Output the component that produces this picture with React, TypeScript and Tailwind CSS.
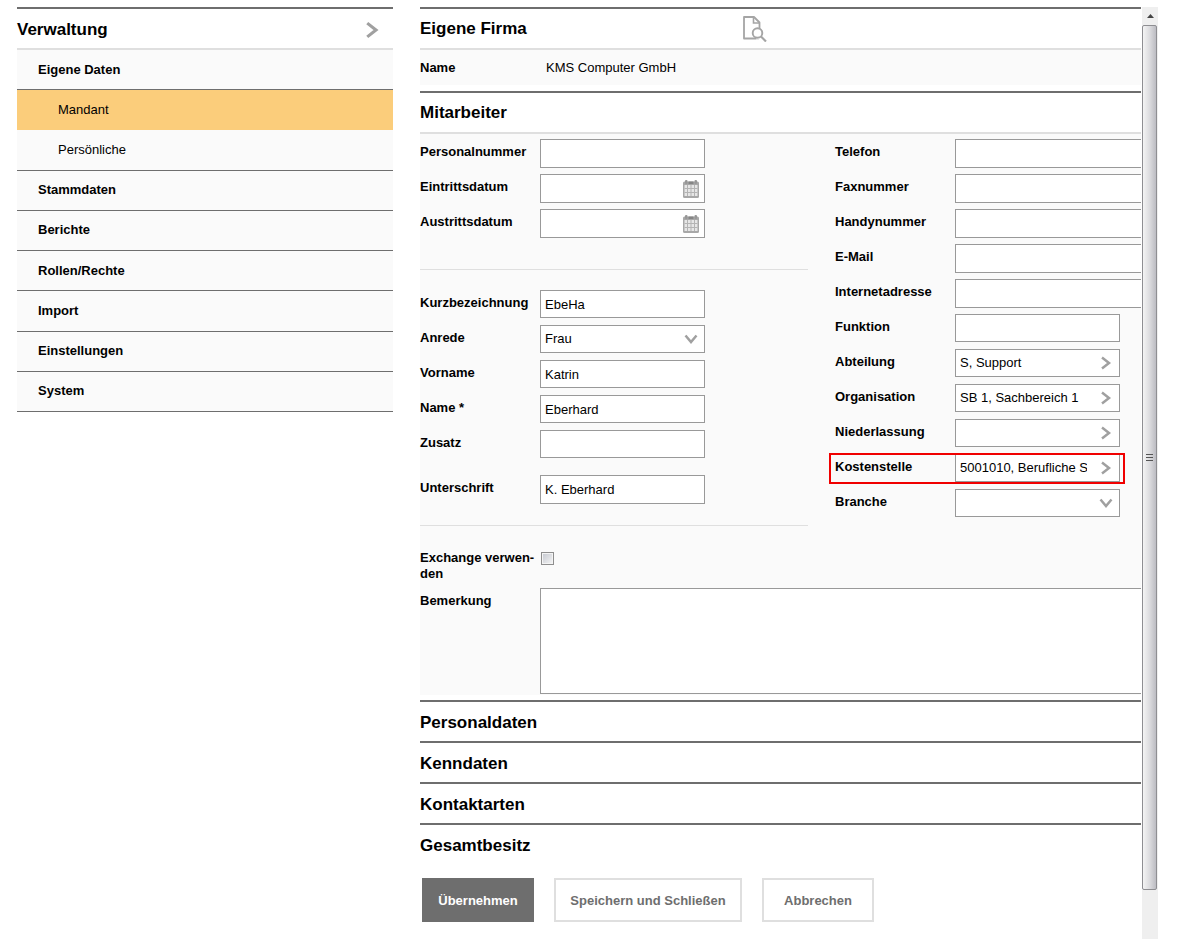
import { useState } from 'react';
import type { ReactNode } from 'react';

interface NavItem {
  label: string;
  sub?: boolean;
}

const navItems: NavItem[] = [
  { label: 'Eigene Daten' },
  { label: 'Mandant', sub: true },
  { label: 'Persönliche', sub: true },
  { label: 'Stammdaten' },
  { label: 'Berichte' },
  { label: 'Rollen/Rechte' },
  { label: 'Import' },
  { label: 'Einstellungen' },
  { label: 'System' },
];

const closedSections = ['Personaldaten', 'Kenndaten', 'Kontaktarten', 'Gesamtbesitz'];

const boxClass = 'border border-[#999] bg-white';

function Chevron({ down = false, size = 16 }: { down?: boolean; size?: number }) {
  return (
    <svg width={size} height={size} viewBox="0 0 16 16" fill="none" stroke="#a0a0a0" strokeWidth="2.5" aria-hidden="true">
      <path d={down ? 'M2.5 4.5L8 11l5.500-6.500' : 'M5 2.500L12 8l-7 5.500'} />
    </svg>
  );
}

function CalendarIcon() {
  return (
    <svg width="16" height="18" viewBox="0 0 16 18" aria-hidden="true">
      <rect x="0" y="1.500" width="16" height="16.500" rx="1.500" fill="#a8a8a8" />
      <rect x="2" y="0" width="2.500" height="4" rx="1" fill="#979797" />
      <rect x="11.500" y="0" width="2.500" height="4" rx="1" fill="#979797" />
      <rect x="5.500" y="1.500" width="5" height="2.500" fill="#858585" />
      <rect x="1.500" y="5" width="13" height="11" fill="#e6e6e6" />
      <path d="M4.500 5v11M8 5v11M11.500 5v11M1.500 8.500h13M1.500 12.500h13" stroke="#b4b4b4" strokeWidth="1" />
    </svg>
  );
}

function DocumentSearchIcon() {
  return (
    <svg width="24" height="26" viewBox="0 0 24 26" fill="none" stroke="#a5a5a5" aria-hidden="true">
      <path d="M16 22.500H1V1h10l5.500 5.500v16" strokeWidth="1.800" strokeLinejoin="round" />
      <path d="M10.500 1v6H16.500" strokeWidth="1.600" />
      <path d="M13 23.500h6v-9h-2z" fill="#fff" stroke="none" />
      <circle cx="14.500" cy="17" r="4.800" strokeWidth="1.900" fill="#fff" />
      <path d="M18 20.500l5 5" strokeWidth="2.200" />
    </svg>
  );
}

interface RowProps {
  id: string;
  label: string;
  className?: string;
  children: ReactNode;
}

function Row({ id, label, className = 'h-[35px]', children }: RowProps) {
  return (
    <div className={`flex ${className}`}>
      <label htmlFor={id} className="w-[120px] shrink-0 pt-[10px] font-bold">
        {label}
      </label>
      {children}
    </div>
  );
}

function TextRow({ id, label, value = '', wide = false, tall = false }: { id: string; label: string; value?: string; wide?: boolean; tall?: boolean }) {
  return (
    <Row id={id} label={label}>
      <input
        id={id}
        type="text"
        defaultValue={value}
        className={`mt-[5px] px-1 outline-none ${boxClass} ${wide ? 'min-w-0 flex-1 border-r-0' : 'w-[165px]'} ${tall ? 'h-[29px]' : 'h-7'}`}
      />
    </Row>
  );
}

function DateRow({ id, label }: { id: string; label: string }) {
  return (
    <Row id={id} label={label}>
      <div className={`mt-[5px] flex h-[29px] w-[165px] ${boxClass}`}>
        <input id={id} type="text" className="min-w-0 flex-1 px-1 outline-none" />
        <button type="button" aria-label={`${label} wählen`} className="flex w-[26px] shrink-0 items-center justify-center">
          <CalendarIcon />
        </button>
      </div>
    </Row>
  );
}

function LookupRow({ id, label, value = '', marked = false }: { id: string; label: string; value?: string; marked?: boolean }) {
  return (
    <Row id={id} label={label} className="relative h-[35px]">
      <div className={`mt-[5px] flex h-7 w-[165px] ${boxClass}`}>
        <div className="mr-1 flex min-w-0 flex-1 pl-1">
          <input id={id} type="text" defaultValue={value} className="w-full min-w-0 outline-none" />
        </div>
        <button type="button" aria-label={`${label} suchen`} className="flex w-7 shrink-0 items-center justify-center">
          <Chevron />
        </button>
      </div>
      {marked && <div className="pointer-events-none absolute top-1 -left-1.5 h-[31px] w-[296px] border-2 border-[#f00000]" />}
    </Row>
  );
}

function SelectRow({ id, label, options }: { id: string; label: string; options: string[] }) {
  return (
    <Row id={id} label={label}>
      <div className="relative mt-[5px] h-7 w-[165px]">
        <select id={id} className={`h-full w-full appearance-none px-1 outline-none ${boxClass}`}>
          {options.map((option) => (
            <option key={option}>{option}</option>
          ))}
        </select>
        <span className="pointer-events-none absolute top-1.5 right-1.5">
          <Chevron down />
        </span>
      </div>
    </Row>
  );
}

function Sidebar() {
  const [active, setActive] = useState('Mandant');

  return (
    <nav className="w-[376px] shrink-0">
      <div className="flex h-[43px] items-center justify-between border-t-2 border-b-2 border-t-[#6e6e6e] border-b-[#dfdfdf] pt-0.5 pr-3">
        <h2 className="text-[17px] font-bold">Verwaltung</h2>
        <Chevron size={20} />
      </div>
      <ul className="grid h-[362px] auto-rows-fr">
        {navItems.map((item, index) => {
          // sub entries run into each other, only the last one closes the group
          const ruled = !item.sub || !navItems[index + 1]?.sub;
          return (
            <li key={item.label} className={ruled ? 'border-b border-[#6e6e6e]' : ''}>
              <a
                href="#"
                onClick={() => setActive(item.label)}
                className={`flex h-full items-center ${item.sub ? 'pl-[41px]' : 'pl-[21px] font-bold'} ${
                  active === item.label ? 'bg-[#fbcd7b]' : 'bg-[#fafafa]'
                }`}
              >
                {item.label}
              </a>
            </li>
          );
        })}
      </ul>
    </nav>
  );
}

function SectionHeader({ title, children }: { title: string; children?: ReactNode }) {
  return (
    <div className="flex h-[43px] items-center border-t-2 border-b-2 border-t-[#6e6e6e] border-b-[#dfdfdf]">
      <h2 className="w-[323px] text-[17px] font-bold">{title}</h2>
      {children}
    </div>
  );
}

function ScrollRail() {
  return (
    <div className="ml-px flex w-4 shrink-0 flex-col bg-[#efefef] pb-[49px]" aria-hidden="true">
      <div className="flex h-[18px] items-center justify-center">
        <svg width="7" height="4" viewBox="0 0 7 4">
          <path d="M0 4L3.5 0 7 4z" fill="#444" />
        </svg>
      </div>
      <div className="mr-px flex flex-1 flex-col items-center justify-center gap-0.5 rounded-xs border border-[#8e8e92] bg-linear-to-r from-[#f4f4f4] via-[#dcdcdf] to-[#bcbcc2]">
        <span className="h-px w-[7px] bg-[#555]" />
        <span className="h-px w-[7px] bg-[#555]" />
        <span className="h-px w-[7px] bg-[#555]" />
      </div>
    </div>
  );
}

export default function App() {
  return (
    <div className="flex min-h-screen bg-white pt-[7px] pr-[19px] pl-[17px] font-['Liberation_Sans',Arial,sans-serif] text-[13px] leading-4 text-black">
      <Sidebar />

      <main className="ml-[27px] min-w-0 flex-1">
        <section>
          <SectionHeader title="Eigene Firma">
            <button type="button" aria-label="Firma anzeigen">
              <DocumentSearchIcon />
            </button>
          </SectionHeader>
          <dl className="mb-[6px] flex h-[35px] bg-[#fafafa] pt-[10px]">
            <dt className="w-[126px] font-bold">Name</dt>
            <dd>KMS Computer GmbH</dd>
          </dl>
        </section>

        <section>
          <SectionHeader title="Mitarbeiter" />
          <form className="mb-[5px] bg-[#fafafa] pb-px">
            <div className="flex gap-[27px]">
              <div className="w-[388px] shrink-0">
                <div className="border-b border-[#dfdfdf] pb-[30px]">
                  <TextRow id="personalnummer" label="Personalnummer" tall />
                  <DateRow id="eintritt" label="Eintrittsdatum" />
                  <DateRow id="austritt" label="Austrittsdatum" />
                </div>
                <div className="border-b border-[#dfdfdf] pt-[15px] pb-5">
                  <TextRow id="kurz" label="Kurzbezeichnung" value="EbeHa" />
                  <SelectRow id="anrede" label="Anrede" options={['Frau', 'Herr']} />
                  <TextRow id="vorname" label="Vorname" value="Katrin" />
                  <TextRow id="name" label="Name *" value="Eberhard" />
                  <TextRow id="zusatz" label="Zusatz" />
                  <div className="pt-[10px]">
                    <TextRow id="unterschrift" label="Unterschrift" value="K. Eberhard" tall />
                  </div>
                </div>
              </div>

              <div className="min-w-0 flex-1">
                <TextRow id="telefon" label="Telefon" wide tall />
                <TextRow id="fax" label="Faxnummer" wide tall />
                <TextRow id="handy" label="Handynummer" wide tall />
                <TextRow id="email" label="E-Mail" wide tall />
                <TextRow id="internet" label="Internetadresse" wide tall />
                <TextRow id="funktion" label="Funktion" />
                <LookupRow id="abteilung" label="Abteilung" value="S, Support" />
                <LookupRow id="organisation" label="Organisation" value="SB 1, Sachbereich 1" />
                <LookupRow id="niederlassung" label="Niederlassung" />
                <LookupRow id="kostenstelle" label="Kostenstelle" value="5001010, Berufliche Schulen" marked />
                <SelectRow id="branche" label="Branche" options={['']} />
              </div>
            </div>

            <Row id="exchange" label={'Exchange verwen\u00adden'} className="mt-[14px] h-[43px]">
              <input
                id="exchange"
                type="checkbox"
                className="mt-3 ml-px size-[13px] appearance-none border border-[#8e8e8e] bg-linear-to-br from-[#c4c7cf] to-[#f6f6f6] shadow-[inset_0_0_0_1px_#f4f4f4] checked:bg-[#6e6e6e]"
              />
            </Row>
            <Row id="bemerkung" label="Bemerkung" className="">
              <textarea id="bemerkung" className={`mt-[5px] h-[106px] min-w-0 flex-1 resize-none border-r-0 p-1 outline-none ${boxClass}`} />
            </Row>
          </form>
        </section>

        {closedSections.map((title) => (
          <h2 key={title} className="h-[41px] border-t-2 border-[#6e6e6e] pt-0.5 text-[17px] font-bold">
            <button type="button" className="flex h-full w-full items-center">
              {title}
            </button>
          </h2>
        ))}

        <div className="flex gap-5 pt-[14px] pl-0.5 font-bold text-[#6e6e6e]">
          <button type="button" className="h-11 w-28 bg-[#6e6e6e] pt-0.5 text-white">
            Übernehmen
          </button>
          <button type="button" className="h-11 w-[188px] border-2 border-[#dfdfdf] pt-0.5">
            Speichern und Schließen
          </button>
          <button type="button" className="h-11 w-28 border-2 border-[#dfdfdf] pt-0.5">
            Abbrechen
          </button>
        </div>
      </main>

      <ScrollRail />
    </div>
  );
}
